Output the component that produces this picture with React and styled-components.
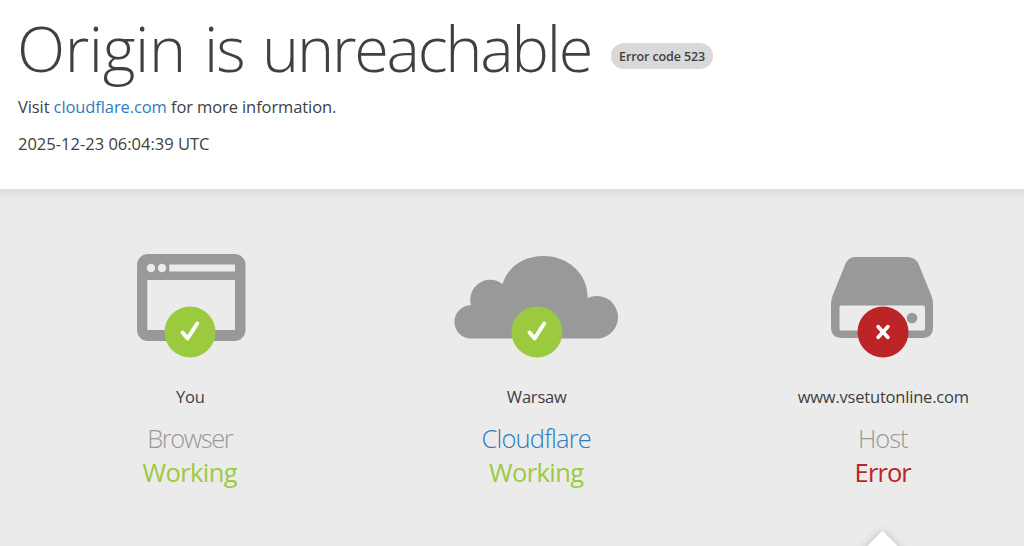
import React from 'react';
import styled, { createGlobalStyle } from 'styled-components';

const Colors = {
  Text: '#404040',
  Link: '#2f7bbf',
  Gray: '#999999',
  Panel: '#ebebeb',
  Green: '#9bca3e',
  Red: '#bd2426',
};

const GlobalStyle = createGlobalStyle`
  * {
    box-sizing: border-box;
  }

  body {
    margin: 0;
    overflow: hidden;
    background: #ffffff;
    color: ${Colors.Text};
    font-family: 'Open Sans', 'Noto Sans', sans-serif;
  }

  h1, h2, h3, p {
    margin: 0;
    font-weight: 400;
  }
`;

const BrowserIcon = () => (
  <svg width="112" height="90" viewBox="0 0 112 90">
    <rect x="3" y="1" width="108.5" height="87" rx="11" fill={Colors.Gray} />
    <circle cx="17" cy="15" r="4.2" fill={Colors.Panel} />
    <circle cx="28" cy="15" r="4.2" fill={Colors.Panel} />
    <path d="M35.300 11.500h65.700v7h-65.700zM13.300 27h87.700v50h-87.700z" fill={Colors.Panel} />
  </svg>
);

const CloudIcon = () => (
  <svg width="166" height="90" viewBox="0 0 166 90">
    <path
      d="M17 85.500a16.500 16.500 0 0 1 0-33.200A20 20 0 0 1 48.500 31C54 14 69 3 89.500 3C115 3 134.500 22 133.500 45A21.300 21.300 0 1 1 142 85.500Z"
      fill={Colors.Gray}
    />
  </svg>
);

const HostIcon = () => (
  <svg width="106" height="90" viewBox="0 0 106 90">
    <path
      d="M25 4H77Q86 4 89 12L101.500 43Q103 47 103 51V74Q103 85 92 85H12Q1 85 1 74V51Q1 47 2.500 43L15 12Q18 4 25 4Z"
      fill={Colors.Gray}
    />
    <rect x="9.500" y="52.500" width="85.500" height="25" rx="2" fill={Colors.Panel} />
    <circle cx="82" cy="65" r="5.300" fill={Colors.Gray} />
  </svg>
);

const CheckBadge = () => (
  <svg width="52" height="52" viewBox="0 0 52 52">
    <circle cx="26" cy="26" r="25.500" fill={Colors.Green} />
    <path
      d="M18.500 26.500L23.600 32.500L33.200 17.500"
      fill="none"
      stroke="#ffffff"
      strokeWidth="4"
      strokeLinecap="round"
      strokeLinejoin="round"
    />
  </svg>
);

const CrossBadge = () => (
  <svg width="52" height="52" viewBox="0 0 52 52">
    <circle cx="26" cy="26" r="25.500" fill={Colors.Red} />
    <path
      d="M21.200 20.700L30.800 31.300M30.800 20.700L21.200 31.300"
      fill="none"
      stroke="#ffffff"
      strokeWidth="3.800"
      strokeLinecap="round"
    />
  </svg>
);

const StatusColumn = ({ icon, badge, place, name, nameSpacing, nameColor, status, statusSpacing, statusColor }) => (
  <Column>
    <IconBox>
      {icon}
      <BadgeSpot>{badge}</BadgeSpot>
    </IconBox>
    <Place>{place}</Place>
    <Name $color={nameColor}>
      <Tracked $spacing={nameSpacing}>{name}</Tracked>
    </Name>
    <Status $color={statusColor}>
      <Tracked $spacing={statusSpacing}>{status}</Tracked>
    </Status>
  </Column>
);

const App = () => (
  <Page>
    <GlobalStyle />
    <Header>
      <TitleRow>
        <Title>
          <Tracked $spacing={-0.4}>Origin</Tracked> <Tracked $spacing={-2}>is</Tracked>{' '}
          <Tracked $spacing={-2.25}>unreachable</Tracked>
        </Title>
        <ErrorCode>Error code 523</ErrorCode>
      </TitleRow>
      <Info>
        Visit <Link href="#">cloudflare.com</Link> for more information.
      </Info>
      <Timestamp>2025-12-23 06:04:39 UTC</Timestamp>
    </Header>
    <Panel>
      <StatusColumn
        icon={<BrowserIcon />}
        badge={<CheckBadge />}
        place="You"
        name="Browser"
        nameSpacing={-1.45}
        nameColor={Colors.Gray}
        status="Working"
        statusSpacing={-0.6}
        statusColor={Colors.Green}
      />
      <StatusColumn
        icon={<CloudIcon />}
        badge={<CheckBadge />}
        place="Warsaw"
        name="Cloudflare"
        nameSpacing={-0.8}
        nameColor={Colors.Link}
        status="Working"
        statusSpacing={-0.6}
        statusColor={Colors.Green}
      />
      <StatusColumn
        icon={<HostIcon />}
        badge={<CrossBadge />}
        place="www.vsetutonline.com"
        name="Host"
        nameSpacing={-1}
        nameColor={Colors.Gray}
        status="Error"
        statusSpacing={-0.9}
        statusColor={Colors.Red}
      />
      <Pointer />
    </Panel>
  </Page>
);

export default App;

const Page = styled.div`
  width: 1024px;
  height: 546px;
  overflow: hidden;
`;

const Header = styled.header`
  height: 189px;
  padding: 6px 0 0 18px;
`;

const TitleRow = styled.div`
  display: flex;
  align-items: flex-start;
  height: 84px;
`;

const Title = styled.h1`
  width: 594px;
  margin-left: -1px;
  font-size: 63px;
  font-weight: 300;
  line-height: 84px;
  white-space: nowrap;
  word-spacing: 2px;
`;

const ErrorCode = styled.span`
  height: 26px;
  margin-top: 37px;
  padding: 0 8px;
  border-radius: 13px;
  background: #d9d9d9;
  font-size: 12.5px;
  font-weight: 600;
  letter-spacing: -0.1px;
  line-height: 28px;
  white-space: nowrap;
`;

const Info = styled.p`
  margin-top: 4px;
  font-size: 16.5px;
  letter-spacing: -0.1px;
  line-height: 25px;
  white-space: nowrap;
`;

const Link = styled.a`
  color: ${Colors.Link};
  text-decoration: none;
`;

const Timestamp = styled.p`
  margin-top: 12px;
  font-size: 16.5px;
  line-height: 25px;
  white-space: nowrap;
`;

const Panel = styled.section`
  position: relative;
  display: grid;
  grid-template-columns: repeat(3, 346.5px);
  height: 357px;
  padding: 64px 0 0 17px;
  background: linear-gradient(#dddddd, ${Colors.Panel} 12px);
`;

const Column = styled.div`
  display: flex;
  flex-direction: column;
  align-items: center;
  white-space: nowrap;
`;

const IconBox = styled.div`
  position: relative;
  display: flex;
  justify-content: center;
  height: 90px;
`;

const BadgeSpot = styled.div`
  position: absolute;
  top: 53px;
  left: 50%;
  height: 52px;
  transform: translateX(-50%);
`;

const Tracked = styled.span`
  letter-spacing: ${({ $spacing = 0 }) => $spacing}px;
`;

const Place = styled.p`
  margin-top: 42px;
  font-size: 16.5px;
  letter-spacing: -0.2px;
  line-height: 24px;
`;

const Name = styled.h2`
  margin-top: 12px;
  padding-right: 1px;
  color: ${({ $color }) => $color};
  font-size: 25.5px;
  font-weight: 300;
  line-height: 34px;
`;

const Status = styled.h3`
  padding-right: 1px;
  color: ${({ $color }) => $color};
  font-size: 25.5px;
  line-height: 34px;
`;

const Pointer = styled.div`
  position: absolute;
  left: 865px;
  bottom: -27px;
  width: 35px;
  height: 35px;
  background: #ffffff;
  box-shadow: 0 0 8px rgba(0, 0, 0, 0.2);
  transform: rotate(45deg);
`;
